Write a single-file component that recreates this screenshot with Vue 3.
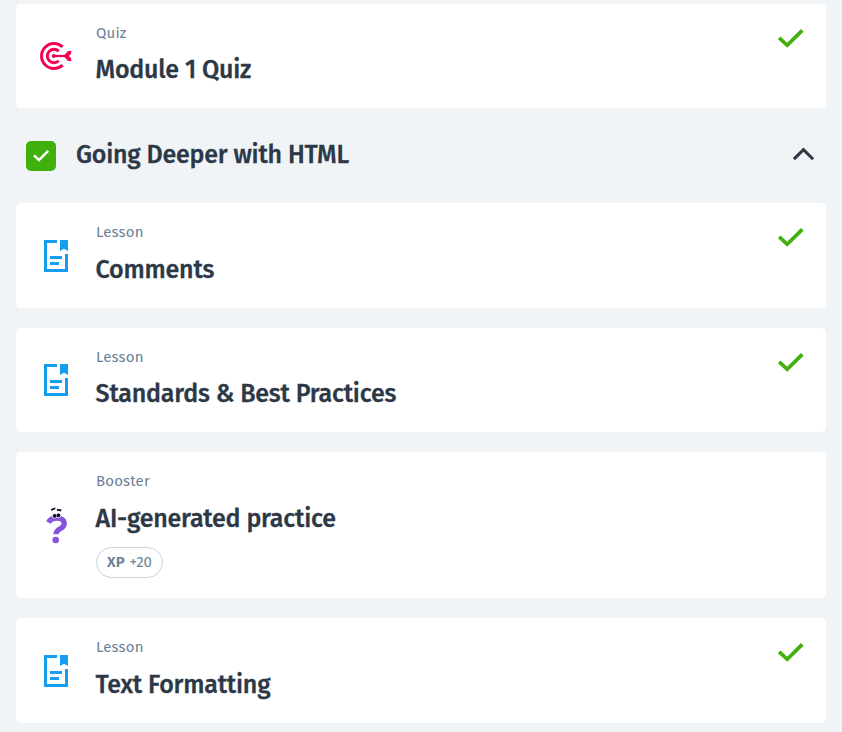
<script setup>
const first = [{ kind: 'Quiz', title: 'Module 1 Quiz', icon: 'quiz', done: true, height: 104 }]
const rest = [
  { kind: 'Lesson', title: 'Comments', icon: 'lesson', done: true, height: 105 },
  { kind: 'Lesson', title: 'Standards & Best Practices', icon: 'lesson', done: true, height: 104 },
  { kind: 'Booster', title: 'AI-generated practice', icon: 'booster', xp: '+20', height: 146 },
  { kind: 'Lesson', title: 'Text Formatting', icon: 'lesson', done: true, height: 105 },
]
const groups = [{ items: first }, { title: 'Going Deeper with HTML', items: rest }]
</script>

<template>
  <main class="page">
    <section v-for="(group, i) in groups" :key="i">
      <header v-if="group.title" class="module">
        <span class="badge">
          <svg width="30" height="30" viewBox="0 0 30 30"><path d="M8 14.4 13 19.1 22.2 9.9" fill="none" stroke="#fff" stroke-width="2.5" /></svg>
        </span>
        <h2 class="title">{{ group.title }}</h2>
        <svg class="chevron" width="22" height="14" viewBox="0 0 22 14"><path d="M1.9 12.1 11.5 2.6 21.1 12.1" fill="none" stroke="#2d3846" stroke-width="3" /></svg>
      </header>
      <div class="list">
        <article v-for="item in group.items" :key="item.title" class="card" :class="{ roomy: item.height > 104 }" :style="{ height: item.height + 'px' }">
          <div class="icon">
            <svg v-if="item.icon === 'quiz'" width="40" height="40" viewBox="0 0 40 40" fill="none" stroke="#f50057" stroke-width="3">
              <path d="M26.6 10.9A12.5 12.5 0 1 0 26.6 29.1" />
              <path d="M22.7 15.3A6.65 6.65 0 1 0 22.7 24.7" />
              <path d="M18 20H29" stroke-width="2.2" />
              <circle cx="17.8" cy="20" r="1.9" fill="#f50057" stroke="none" />
              <path d="M27.5 20 32 15H35.2V17.5L33 20 35.2 22.5V25H32Z" fill="#f50057" stroke="none" />
            </svg>
            <svg v-else-if="item.icon === 'lesson'" width="40" height="40" viewBox="0 0 40 40" fill="#149df2">
              <path d="M8 4H21V7H11V33H29V18H32V36H8Z" />
              <path d="M24 4H32V15L28 12.8 24 15Z" />
              <path d="M14 20H26V23H14ZM14 26H23V29H14Z" />
            </svg>
            <svg v-else width="40" height="40" viewBox="0 0 40 40">
              <path d="M12.4 17.5C14.3 14.2 17.4 12.9 21 13C25.9 13.2 28.4 15.5 28.2 19C27.8 24.7 20 22.9 20 29.3" fill="none" stroke="#8554dc" stroke-width="5.3" />
              <circle cx="19.7" cy="35" r="3.3" fill="#8554dc" />
              <circle cx="18.4" cy="11" r="2.5" fill="#d9cdf5" />
              <circle cx="22.5" cy="10.7" r="2.5" fill="#d9cdf5" />
              <circle cx="18.7" cy="10.9" r="1.8" fill="#080f20" />
              <circle cx="22.5" cy="10.4" r="1.8" fill="#080f20" />
              <path d="M15.3 5.2Q17 3.6 19.3 3.4M21 5Q23 4.6 25.3 5.5" fill="none" stroke="#080f20" stroke-width="1.9" />
            </svg>
          </div>
          <div class="body">
            <div class="kind">{{ item.kind }}</div>
            <h3 class="title">{{ item.title }}</h3>
            <div v-if="item.xp" class="xp"><b>XP</b><span>{{ item.xp }}</span></div>
          </div>
          <svg v-if="item.done" class="done" width="26" height="20" viewBox="0 0 26 20"><path d="M1.2 9.8 9.2 17.3 24.3 2.4" fill="none" stroke="#40b00c" stroke-width="3.7" /></svg>
        </article>
      </div>
    </section>
  </main>
</template>

<style>
body { background: #f0f4f7; overflow: hidden; }
</style>

<style scoped>
.page {
  box-sizing: border-box;
  height: 732px;
  padding: 4px 16px 0;
  overflow: hidden;
  font-family: "Fira Sans", "Noto Sans", sans-serif;
  color: #2d3846;
}
.list { display: flex; flex-direction: column; gap: 20px; }
.card {
  box-sizing: border-box;
  display: flex;
  padding: 0 22px 0 20px;
  background: #fff;
  border-radius: 5px;
}
.icon { display: flex; align-items: center; width: 60px; }
.body { flex: 1; padding-top: 19px; }
.kind { font-size: 15px; line-height: 20px; letter-spacing: 0.15px; color: #6c7f97; }
.title {
  margin: 0;
  font-size: 25px;
  line-height: 32px;
  font-weight: 500;
  letter-spacing: -0.21px;
  white-space: nowrap;
  -webkit-text-stroke: 0.3px currentColor;
}
.card .title { margin-top: 11px; margin-left: -0.4px; }
.card.roomy .title { margin-top: 12px; }
.done { margin-top: 24px; }
.module { display: flex; align-items: center; height: 95px; padding: 0 12px 0 10px; }
.module .title { margin-bottom: 2px; }
.badge { width: 30px; height: 30px; margin-right: 20px; background: #40b00c; border-radius: 5px; }
.badge svg { display: block; }
.chevron { margin-left: auto; margin-bottom: 3px; }
.xp {
  box-sizing: border-box;
  display: flex;
  align-items: center;
  justify-content: center;
  gap: 5px;
  width: 67px;
  height: 31px;
  margin-top: 12px;
  padding-bottom: 1px;
  border: 1px solid #c8d3df;
  border-radius: 16px;
  font-size: 15px;
  color: #6c7f97;
}
.xp b { font-weight: 600; }
</style>
